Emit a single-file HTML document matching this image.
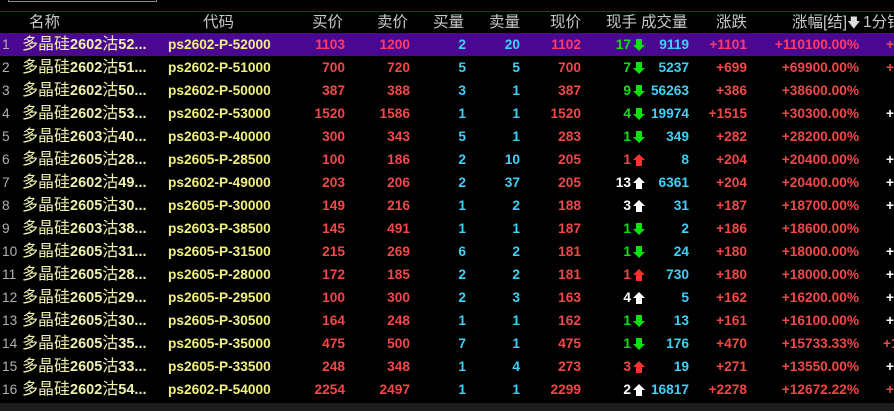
<!DOCTYPE html>
<html><head><meta charset="utf-8"><style>
body{margin:0;width:894px;height:411px;background:#000;overflow:hidden;position:relative;font-family:"Liberation Sans","Noto Sans CJK SC",sans-serif;}
.box{position:absolute;left:8px;top:-2px;width:147px;height:3px;border:1px solid #888;border-top:none;}
.rl{position:absolute;left:0;top:11px;width:894px;height:1px;background:#7a1010;}
.bot{position:absolute;left:0;top:403px;width:894px;height:8px;background:#1c1c1c;}
.h{position:absolute;top:12px;height:21px;line-height:21px;color:#c8c8c8;font-size:15.5px;white-space:nowrap;}
.row{position:absolute;left:0;width:894px;height:23px;line-height:23px;font-size:13.7px;font-weight:bold;white-space:nowrap;}
.row span{position:absolute;}
.n{left:2px;color:#b0b0b0;font-weight:normal;}
.nm{left:22px;color:#f0f0b0;font-size:14.5px;}
.nm i{font-style:normal;font-weight:normal;font-size:16px;}
.cd{left:168px;color:#f0f080;}
.r{text-align:right;}
.red{color:#f04848;}
.cy{color:#40d0f8;}
.gr{color:#10e010;}
.wh{color:#fff;}
</style></head><body>
<div class="box"></div><div class="rl"></div>
<div class="h" style="left:29px">名称</div>
<div class="h" style="left:203px">代码</div>
<div class="h" style="left:312px">买价</div>
<div class="h" style="left:377px">卖价</div>
<div class="h" style="left:433px">买量</div>
<div class="h" style="left:489px">卖量</div>
<div class="h" style="left:550px">现价</div>
<div class="h" style="left:606px">现手</div>
<div class="h" style="left:641px">成交量</div>
<div class="h" style="left:716px">涨跌</div>
<div class="h" style="left:792px">涨幅[结]<span style="color:#ddd;font-size:13px">&#129095;</span></div>
<div class="h" style="left:863px">1分钟</div>
<div id="rows"></div>
<div class="bot"></div>
<script>
var d=[
["2602","52","ps2602-P-52000",1103,1200,2,20,1102,17,"d",9119,"+1101","+110100.00%","r"],
["2602","51","ps2602-P-51000",700,720,5,5,700,7,"d",5237,"+699","+69900.00%","r"],
["2602","50","ps2602-P-50000",387,388,3,1,387,9,"d",56263,"+386","+38600.00%",""],
["2602","53","ps2602-P-53000",1520,1586,1,1,1520,4,"d",19974,"+1515","+30300.00%","w"],
["2603","40","ps2603-P-40000",300,343,5,1,283,1,"d",349,"+282","+28200.00%",""],
["2605","28","ps2605-P-28500",100,186,2,10,205,1,"u",8,"+204","+20400.00%","w"],
["2602","49","ps2602-P-49000",203,206,2,37,205,13,"w",6361,"+204","+20400.00%","w"],
["2605","30","ps2605-P-30000",149,216,1,2,188,3,"w",31,"+187","+18700.00%","w"],
["2603","38","ps2603-P-38500",145,491,1,1,187,1,"d",2,"+186","+18600.00%",""],
["2605","31","ps2605-P-31500",215,269,6,2,181,1,"d",24,"+180","+18000.00%","w"],
["2605","28","ps2605-P-28000",172,185,2,2,181,1,"u",730,"+180","+18000.00%","w"],
["2605","29","ps2605-P-29500",100,300,2,3,163,4,"w",5,"+162","+16200.00%","w"],
["2605","30","ps2605-P-30500",164,248,1,1,162,1,"d",13,"+161","+16100.00%","w"],
["2605","35","ps2605-P-35000",475,500,7,1,475,1,"d",176,"+470","+15733.33%","r1"],
["2605","33","ps2605-P-33500",248,348,1,4,273,3,"u",19,"+271","+13550.00%","w"],
["2602","54","ps2602-P-54000",2254,2497,1,1,2299,2,"w",16817,"+2278","+12672.22%","r"]];
var h="";
function R(x,t,c){return '<span class="r '+c+'" style="right:'+(894-x)+'px">'+t+'</span>';}
function arrow(t){var col=t=="d"?"#10e010":t=="u"?"#ff3030":"#fff";
 if(t=="d")return '<svg width="14" height="14" viewBox="0 0 14 14" style="position:absolute;left:632px;top:5px"><path d="M4 1h6v6h3L7 13 1 7h3z" fill="'+col+'"/></svg>';
 return '<svg width="14" height="14" viewBox="0 0 14 14" style="position:absolute;left:632px;top:5px"><path d="M4 13h6V7h3L7 1 1 7h3z" fill="'+col+'"/></svg>';}
d.forEach(function(r,i){
 var top=33+i*23, pur=i==0;
 h+='<div class="row" style="top:'+top+'px;'+(pur?'background:#4a0890;':'')+'">';
 h+='<span class="n">'+(i+1)+'</span><span class="nm"><i>多晶硅</i>'+r[0]+'<i>沽</i>'+r[1]+'...</span><span class="cd">'+r[2]+'</span>';
 var rc=pur?"red p":"red";
 h+=R(345,r[3],rc)+R(410,r[4],rc)+R(466,r[5],"cy")+R(520,r[6],"cy")+R(581,r[7],rc);
 var hc=r[9]=="d"?"gr":r[9]=="u"?"red":"wh";
 h+=R(631,r[8],hc)+arrow(r[9]);
 h+=R(689,r[10],"cy")+R(747,r[11],rc)+R(859,r[12],rc);
 if(r[13]=="r")h+='<span class="red" style="left:886px">+</span>';
 if(r[13]=="w")h+='<span class="wh" style="left:886px">+</span>';
 if(r[13]=="r1")h+='<span class="red" style="left:883px">+1</span>';
 h+='</div>';});
document.getElementById("rows").innerHTML=h;
document.querySelectorAll(".p").forEach(function(e){e.style.color="#ff3a6a"});
</script>
</body></html>
